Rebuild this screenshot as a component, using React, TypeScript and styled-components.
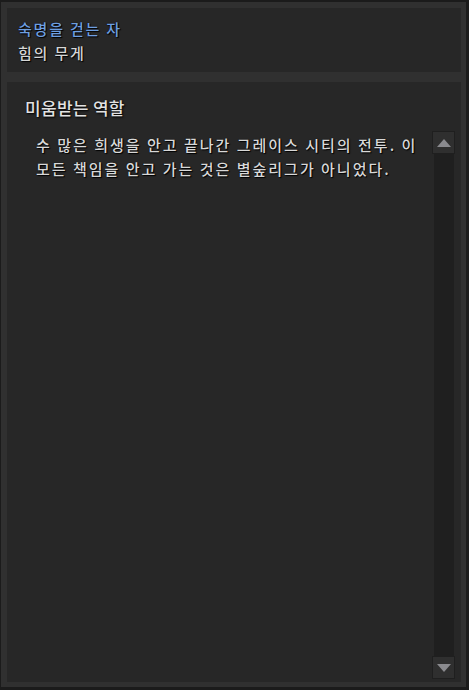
import React from 'react';
import styled, { createGlobalStyle } from 'styled-components';

const GlobalStyle = createGlobalStyle`
  html, body {
    margin: 0;
    padding: 0;
    background: #1b1b1b;
  }
  body {
    font-family: 'Noto Sans CJK KR', 'Noto Sans', sans-serif;
  }
`;

const Frame = styled.div`
  box-sizing: border-box;
  width: 469px;
  height: 690px;
  display: flex;
  flex-direction: column;
  gap: 10px;
  padding: 6px 5px 5px 6px;
  background: #303030;
  border-style: solid;
  border-color: #1b1b1b;
  border-width: 2px 3px 3px 1px;
`;

const Panel = styled.div<{ $grow?: boolean }>`
  background: #272727;
  display: flex;
  flex-direction: column;
  ${(p) => (p.$grow ? 'flex: 1; min-height: 0;' : 'height: 64px;')}
`;

const Header = styled.div`
  padding: 9px 0 0 11px;
  line-height: 24px;
  font-size: 15px;
  font-weight: 500;
  letter-spacing: 1.8px;
  text-shadow: 1px 1px 1px #000, 0 0 1px #000;
`;

const Title = styled.div`
  color: #6f9fe0;
`;

const Subtitle = styled.div`
  color: #d6d6d6;
`;

const SectionTitle = styled.h2`
  margin: 0;
  padding: 14px 0 0 18px;
  font-size: 17px;
  font-weight: 500;
  letter-spacing: 0.3px;
  line-height: 24px;
  color: #e2e2e2;
  text-shadow: 1px 1px 2px #000, 0 0 1px #000;
`;

const Body = styled.div`
  flex: 1;
  min-height: 0;
  display: flex;
  margin-top: 11px;
  padding-bottom: 3px;
`;

const Text = styled.p`
  flex: 1;
  margin: 0;
  padding: 2px 4px 0 29px;
  font-size: 15px;
  font-weight: 500;
  letter-spacing: 2px;
  line-height: 24px;
  color: #d8d8d8;
  text-shadow: 1px 1px 1px #000, 0 0 1px #000;
  word-break: keep-all;
`;

const Scrollbar = styled.div`
  width: 23px;
  margin-right: 6px;
  display: flex;
  flex-direction: column;
  align-items: center;
`;

const ScrollButton = styled.div`
  box-sizing: border-box;
  width: 23px;
  height: 23px;
  background: #2f2f2f;
  border: 1px solid #1f1f1f;
  display: flex;
  align-items: center;
  justify-content: center;
`;

const Track = styled.div`
  flex: 1;
  width: 20px;
  background: #1f1f1f;
`;

const Arrow = ({ up }: { up?: boolean }) => (
  <svg width="14" height="8" viewBox="0 0 14 8">
    <polygon points={up ? '7,0 14,8 0,8' : '0,0 14,0 7,8'} fill="#8a8a8e" />
  </svg>
);

const App = () => {
  return (
    <>
      <GlobalStyle />
      <Frame>
        <Panel>
          <Header>
            <Title>숙명을 걷는 자</Title>
            <Subtitle>힘의 무게</Subtitle>
          </Header>
        </Panel>
        <Panel $grow>
          <SectionTitle>미움받는 역할</SectionTitle>
          <Body>
            <Text>
              수 많은 희생을 안고 끝나간 그레이스 시티의 전투. 이 모든 책임을 안고 가는 것은 별숲리그가 아니었다.
            </Text>
            <Scrollbar>
              <ScrollButton>
                <Arrow up />
              </ScrollButton>
              <Track />
              <ScrollButton>
                <Arrow />
              </ScrollButton>
            </Scrollbar>
          </Body>
        </Panel>
      </Frame>
    </>
  );
};

export default App;
